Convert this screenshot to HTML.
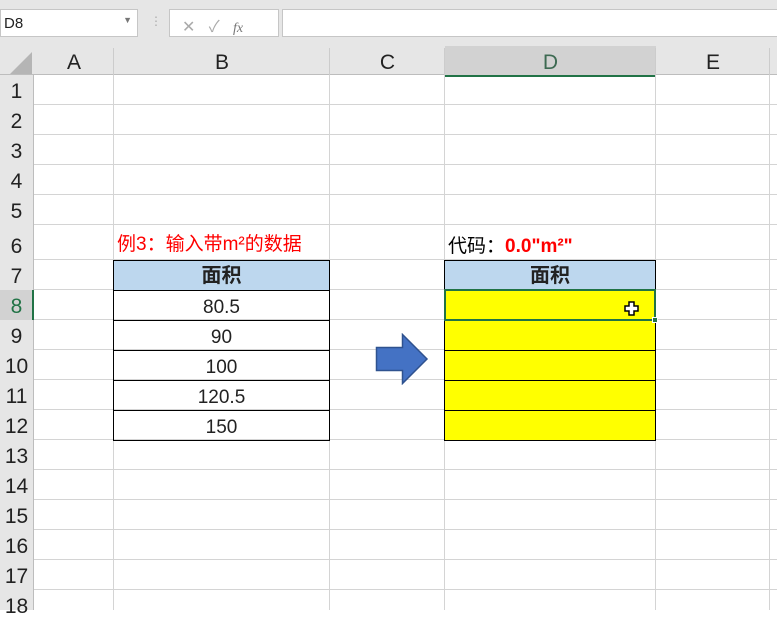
<!DOCTYPE html><html><head><style>
body{margin:0;width:777px;height:610px;overflow:hidden;background:#fff;font-family:"Liberation Sans","Noto Sans CJK SC",sans-serif;position:relative}
.a{position:absolute;box-sizing:border-box}
.hl{position:absolute;left:34px;right:0;height:1px;background:#d4d4d4}
.vl{position:absolute;top:75px;bottom:0;width:1px;background:#d4d4d4}
.rn{position:absolute;left:0;width:33px;text-align:center;font-size:21px;color:#222}
.ch{position:absolute;top:46px;height:29px;line-height:34px;text-align:center;font-size:21px;color:#222}
.c{position:absolute;text-align:center;font-size:19px;color:#222;box-sizing:border-box;border:1px solid #000}
</style></head><body>
<div class="a" style="left:0;top:0;width:777px;height:46px;background:#e6e6e6"></div>
<div class="a" style="left:0;top:9px;width:138px;height:28px;background:#fff;border:1px solid #c6c6c6;font-size:15px;padding:5px 3px;color:#222">D8<span style="position:absolute;right:5px;top:5px;font-size:9px;color:#777">▼</span></div>
<div class="a" style="left:150px;top:14px;color:#aaa;font-size:12px">⋮</div>
<div class="a" style="left:169px;top:9px;width:110px;height:28px;background:#fff;border:1px solid #c6c6c6;color:#aaa;font-size:16px;padding:3px 0 0 12px;letter-spacing:0">✕ &nbsp;&nbsp;✓ &nbsp;&nbsp;<i style="font-family:'Liberation Serif';font-size:14px;color:#777">fx</i></div>
<div class="a" style="left:282px;top:9px;width:500px;height:28px;background:#fff;border:1px solid #c6c6c6"></div>
<div class="a" style="left:0;top:46px;width:777px;height:29px;background:#e6e6e6;border-bottom:1px solid #bdbdbd"></div>
<div class="a" style="left:0;top:75px;width:34px;height:535px;background:#e6e6e6;border-right:1px solid #bdbdbd"></div>
<svg class="a" style="left:8px;top:52px" width="24" height="22"><polygon points="24,0 24,22 2,22" fill="#b5b5b5"/></svg>
<div class="ch" style="left:34px;width:80px">A</div>
<div class="ch" style="left:114px;width:216px">B</div>
<div class="ch" style="left:330px;width:115px">C</div>
<div class="ch" style="left:445px;width:211px;background:#d2d2d2;border-bottom:2px solid #217346;color:#3d6a52">D</div>
<div class="ch" style="left:656px;width:114px">E</div>
<div class="a" style="left:113px;top:48px;width:1px;height:27px;background:#ccc"></div>
<div class="a" style="left:329px;top:48px;width:1px;height:27px;background:#ccc"></div>
<div class="a" style="left:444px;top:48px;width:1px;height:27px;background:#ccc"></div>
<div class="a" style="left:655px;top:48px;width:1px;height:27px;background:#ccc"></div>
<div class="a" style="left:769px;top:48px;width:1px;height:27px;background:#ccc"></div>
<div class="vl" style="left:113px"></div><div class="vl" style="left:329px"></div><div class="vl" style="left:444px"></div><div class="vl" style="left:655px"></div><div class="vl" style="left:769px"></div>
<div class="hl" style="top:104px"></div><div class="hl" style="top:134px"></div><div class="hl" style="top:164px"></div><div class="hl" style="top:194px"></div><div class="hl" style="top:224px"></div><div class="hl" style="top:259px"></div><div class="hl" style="top:289px"></div><div class="hl" style="top:319px"></div><div class="hl" style="top:349px"></div><div class="hl" style="top:379px"></div><div class="hl" style="top:409px"></div><div class="hl" style="top:439px"></div><div class="hl" style="top:469px"></div><div class="hl" style="top:499px"></div><div class="hl" style="top:529px"></div><div class="hl" style="top:559px"></div><div class="hl" style="top:589px"></div>
<div class="rn" style="top:80px">1</div><div class="rn" style="top:110px">2</div><div class="rn" style="top:140px">3</div><div class="rn" style="top:170px">4</div><div class="rn" style="top:200px">5</div><div class="rn" style="top:235px">6</div><div class="rn" style="top:265px">7</div>
<div class="a" style="left:0;top:290px;width:34px;height:30px;background:#d2d2d2;border-right:2px solid #217346"></div>
<div class="rn" style="top:295px;color:#217346">8</div><div class="rn" style="top:325px">9</div><div class="rn" style="top:355px">10</div><div class="rn" style="top:385px">11</div><div class="rn" style="top:415px">12</div><div class="rn" style="top:445px">13</div><div class="rn" style="top:475px">14</div><div class="rn" style="top:505px">15</div><div class="rn" style="top:535px">16</div><div class="rn" style="top:565px">17</div><div class="rn" style="top:595px">18</div>
<div class="a" style="left:117px;top:229px;font-size:19px;color:#f00">例3<span style="font-family:'Noto Sans CJK SC'">：</span>输入带m²的数据</div>
<div class="a" style="left:448px;top:231px;font-size:19px;color:#000">代码<span style="font-family:'Noto Sans CJK SC'">：</span><b style="color:#f00">0.0"m²"</b></div>
<div class="c" style="left:113px;top:260px;width:217px;height:31px;background:#bdd7ee;font-weight:bold;line-height:31px;font-size:20px">面积</div>
<div class="c" style="left:113px;top:290px;width:217px;height:31px;line-height:34px">80.5</div>
<div class="c" style="left:113px;top:320px;width:217px;height:31px;line-height:34px">90</div>
<div class="c" style="left:113px;top:350px;width:217px;height:31px;line-height:34px">100</div>
<div class="c" style="left:113px;top:380px;width:217px;height:31px;line-height:34px">120.5</div>
<div class="c" style="left:113px;top:410px;width:217px;height:31px;line-height:34px">150</div>
<div class="c" style="left:444px;top:260px;width:212px;height:31px;background:#bdd7ee;font-weight:bold;line-height:31px;font-size:20px">面积</div>
<div class="c" style="left:444px;top:290px;width:212px;height:31px;background:#ff0"></div>
<div class="c" style="left:444px;top:320px;width:212px;height:31px;background:#ff0"></div>
<div class="c" style="left:444px;top:350px;width:212px;height:31px;background:#ff0"></div>
<div class="c" style="left:444px;top:380px;width:212px;height:31px;background:#ff0"></div>
<div class="c" style="left:444px;top:410px;width:212px;height:31px;background:#ff0"></div>
<div class="a" style="left:444px;top:289px;width:212px;height:32px;border:2px solid #217346"></div>
<div class="a" style="left:652px;top:317px;width:6px;height:6px;background:#217346;border:1px solid #fff"></div>
<svg class="a" style="left:624px;top:301px" width="16" height="16"><path d="M5 1h5v4h4v5h-4v4H5v-4H1V5h4z" fill="#fff" stroke="#000" stroke-width="1.5"/></svg>
<svg class="a" style="left:375px;top:333px" width="55" height="52"><path d="M1.5 14.5h26V1.5L52 26 27.5 50.5v-13h-26z" fill="#4472c4" stroke="#2f528f" stroke-width="1.5"/></svg>
</body></html>
